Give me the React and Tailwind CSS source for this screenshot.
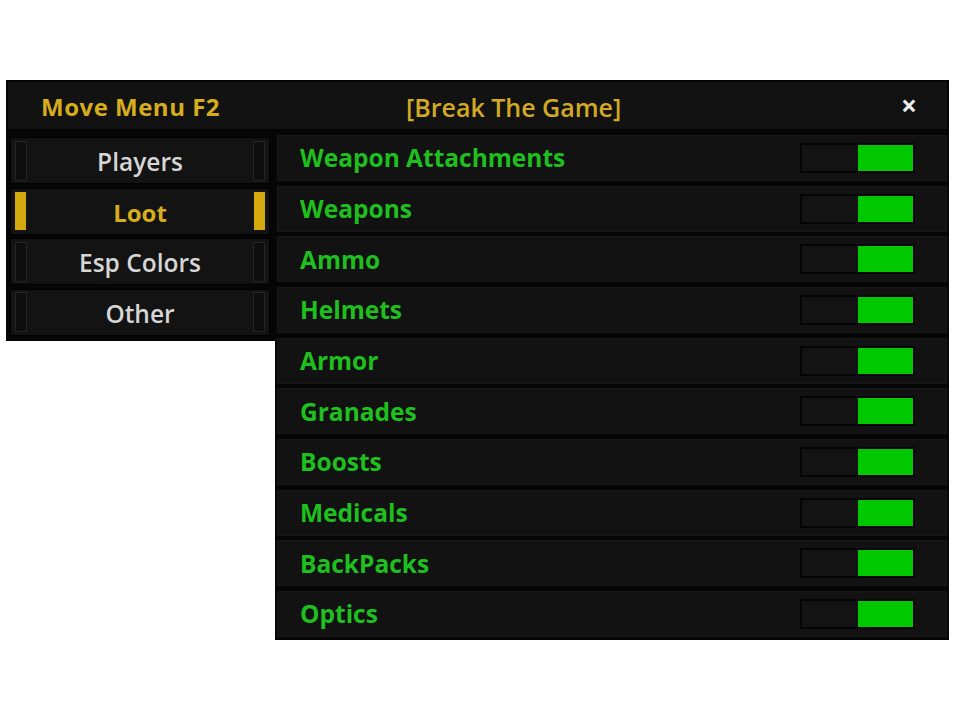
import React from "react";

const rows = [
  "Weapon Attachments",
  "Weapons",
  "Ammo",
  "Helmets",
  "Armor",
  "Granades",
  "Boosts",
  "Medicals",
  "BackPacks",
  "Optics",
];

const tabs = [
  { label: "Players", active: false },
  { label: "Loot", active: true },
  { label: "Esp Colors", active: false },
  { label: "Other", active: false },
];

function Marker({ active }) {
  return active ? (
    <div className="w-[11px] h-[38px] bg-[#d3a90e]" />
  ) : (
    <div className="w-[12px] h-[40px] bg-[#0e0e0e] border border-[#262626] rounded-[1px]" />
  );
}

export default function App() {
  return (
    <div
      className="w-[960px] h-[720px] bg-white overflow-hidden"
      style={{ fontFamily: '"Open Sans", "DejaVu Sans", sans-serif' }}
    >
      <div className="pt-[80px] pl-[6px]">
        <div className="w-[943px]">
          {/* Header */}
          <div className="h-[51px] bg-[#121212] border-2 border-[#050505] flex items-center pt-[3px]">
            <div className="w-[398px] pl-[33px] text-[24px] font-bold tracking-[0.5px] text-[#d6ad1c] leading-none">
              Move Menu F2
            </div>
            <div className="text-[25px] font-semibold text-[#d2aa24] leading-none">
              [Break The Game]
            </div>
            <div className="ml-auto mr-[30px] text-[28px] font-bold text-[#ececec] leading-none -mt-[4px]">
              ×
            </div>
          </div>

          <div className="flex items-start">
            {/* Sidebar */}
            <div className="w-[269px] bg-[#060606] pt-[6px] pb-[5px] pl-[4px] pr-[5px] flex flex-col gap-[3.67px]">
              {tabs.map((t) => (
                <div
                  key={t.label}
                  className="h-[47px] bg-[#131313] border border-[#000] flex items-center justify-between px-[4px]"
                >
                  <Marker active={t.active} />
                  <span
                    className={
                      t.active
                        ? "text-[24px] font-bold text-[#d6ad1c] leading-none pt-[3px]"
                        : "text-[24.5px] font-semibold text-[#d6d6d6] leading-none pt-[3px]"
                    }
                  >
                    {t.label}
                  </span>
                  <Marker active={t.active} />
                </div>
              ))}
            </div>

            {/* Content */}
            <div className="w-[674px] bg-[#060606] pt-[4px] pb-[3px] px-[2px] flex flex-col gap-[4.67px]">
              {rows.map((r) => (
                <div
                  key={r}
                  className="h-[46px] bg-[#121212] border border-[#181818] flex items-center pl-[22px] pr-[31px]"
                >
                  <span className="text-[24.5px] font-bold text-[#1fbf1f] leading-none pt-[1px]">
                    {r}
                  </span>
                  <div className="ml-auto w-[115px] h-[30px] bg-[#131313] border-2 border-[#050505] flex justify-end">
                    <div className="w-[55px] h-full bg-[#00c800]" />
                  </div>
                </div>
              ))}
            </div>
          </div>
        </div>
      </div>
    </div>
  );
}
